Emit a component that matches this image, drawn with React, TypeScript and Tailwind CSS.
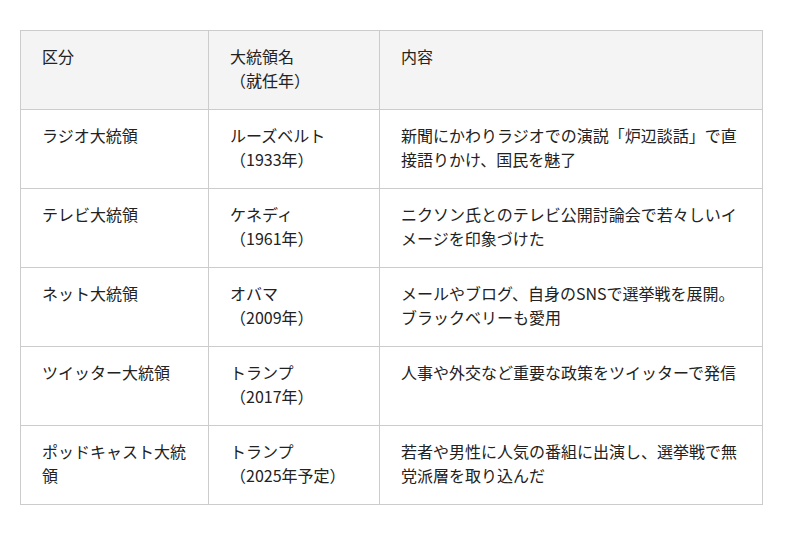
import React from "react";

const rows: [string, string[], string][] = [
  ["ラジオ大統領", ["ルーズベルト", "（1933年）"], "新聞にかわりラジオでの演説「炉辺談話」で直接語りかけ、国民を魅了"],
  ["テレビ大統領", ["ケネディ", "（1961年）"], "ニクソン氏とのテレビ公開討論会で若々しいイメージを印象づけた"],
  ["ネット大統領", ["オバマ", "（2009年）"], "メールやブログ、自身のSNSで選挙戦を展開。ブラックベリーも愛用"],
  ["ツイッター大統領", ["トランプ", "（2017年）"], "人事や外交など重要な政策をツイッターで発信"],
  ["ポッドキャスト大統領", ["トランプ", "（2025年予定）"], "若者や男性に人気の番組に出演し、選挙戦で無党派層を取り込んだ"],
];

export default function App() {
  const td = "border border-[#cccccc] align-top pl-[21px] pr-[20px] pt-[13px] pb-[17px] h-[79px]";
  return (
    <div
      className="w-[800px] h-[535px] bg-white pt-[30px] pl-[20px] text-[16px] leading-[24px] text-[#222222]"
      style={{ fontFamily: '"Noto Sans CJK JP", "Noto Sans", sans-serif' }}
    >
      <table className="border-collapse table-fixed w-[742px]">
        <colgroup>
          <col className="w-[188px]" />
          <col className="w-[171px]" />
          <col className="w-[383px]" />
        </colgroup>
        <thead>
          <tr className="bg-[#f4f4f4]">
            <th className={td + " font-normal text-left"}>区分</th>
            <th className={td + " font-normal text-left"}>
              <div>大統領名</div>
              <div>（就任年）</div>
            </th>
            <th className={td + " font-normal text-left"}>内容</th>
          </tr>
        </thead>
        <tbody>
          {rows.map((r, i) => (
            <tr key={i}>
              <td className={td}>{r[0]}</td>
              <td className={td}>
                <div>{r[1][0]}</div>
                <div>{r[1][1]}</div>
              </td>
              <td className={td}>{r[2]}</td>
            </tr>
          ))}
        </tbody>
      </table>
    </div>
  );
}
